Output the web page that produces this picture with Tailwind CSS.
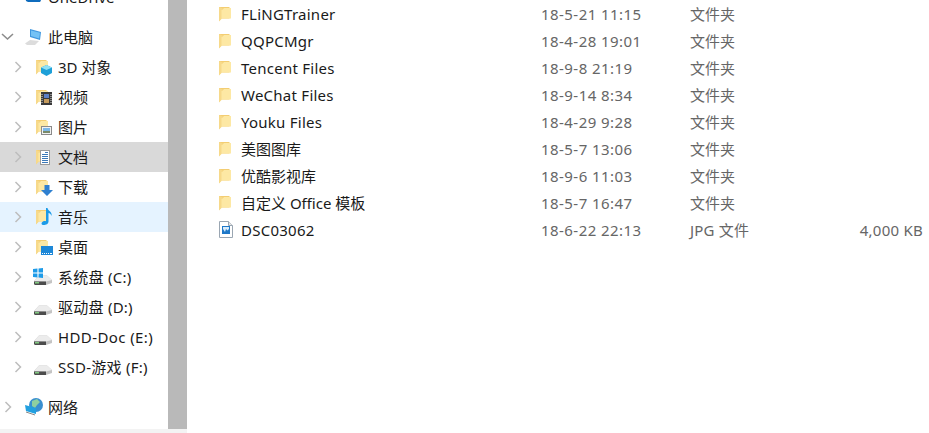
<!doctype html>
<html lang="zh"><head><meta charset="utf-8"><script src="https://cdn.jsdelivr.net/npm/@tailwindcss/browser@4"></script></head>
<body class="w-[929px] h-[433px] overflow-hidden bg-white font-['Noto_Sans','Noto_Sans_CJK_SC',sans-serif] text-[15px] leading-[20px] text-[#1a1a1a]">
<svg width="0" height="0" class="absolute">
<defs>
<symbol id="f" viewBox="0 0 12 16"><path d="M0 1h10.500v11.500H2L0 15z" fill="#f3cd72"/><path d="M1 3.500h2.500L5 2h7v10.500H1z" fill="#fde8a4"/><path d="M0 1v14.500L2.500 13V4L4 2.500" fill="#f7d98a"/></symbol>
<symbol id="ch" viewBox="0 0 8 12"><path d="M1.500 1l5 5-5 5" fill="none" stroke="#bdbdbd" stroke-width="1.500"/></symbol>
<symbol id="d" viewBox="0 0 20 10"><path d="M1 6l5-5.500h8L19 5v3l-6 2H2L1 9z" fill="#c4c4c4"/><path d="M1 6l5-5.500h8L19 5 13 6.500z" fill="#ececec"/><path d="M1 6.500h12V10H2L1 9z" fill="#4c4c4c"/><rect x="2" y="7" width="4" height="1.500" fill="#7fc97f"/></symbol>
</defs>
</svg>
<div class="flex h-[433px]">
<div class="w-[187px] shrink-0 h-full bg-[#f3f3f3]">
<div class="flex h-[429px] bg-white overflow-hidden">
<nav class="w-[168px] shrink-0 -mt-[18px] flex flex-col">
 <div class="h-[30px] flex items-center pl-[25px] gap-[5px]"><svg width="18" height="12" viewBox="0 0 18 12" class="-mt-[2px]"><path d="M1 11a4 4 0 0 1 4-5 5 5 0 0 1 9 1 3 3 0 0 1 1 5H3z" fill="#0f6cbd"/></svg><span>OneDrive</span></div>
 <div class="h-[10px]"></div>
 <div class="h-[30px] flex items-center">
  <svg width="14" height="8" viewBox="0 0 14 8" class="ml-[1px] mr-[9px]"><path d="M1 1l5.500 5L12 1" fill="none" stroke="#8c8c8c" stroke-width="1.600"/></svg>
  <svg width="20" height="18" viewBox="0 0 20 18" class="mr-[4px]"><path d="M6 1l11 3-1 8-10-3z" fill="#3f97df"/><path d="M7 2.500l9 2.200-.8 5.800L7 8z" fill="#74c2f5"/><path d="M1 15.500l5-3.500 9 1-4 4H3z" fill="#dcdcdc"/></svg>
  <span>此电脑</span></div>
 <div class="h-[30px] flex items-center pl-[14px]"><svg width="8" height="12" class="mr-[14px] shrink-0"><use href="#ch"/></svg>
  <span class="relative w-[16px] h-[18px] mr-[6px] shrink-0"><svg width="12" height="16" class="absolute left-0 top-[1px]"><use href="#f"/></svg><svg width="11" height="11" viewBox="0 0 11 11" class="absolute left-[5px] top-[7px]"><path d="M5.500 0L11 2.500V8L5.500 11 0 8V2.500z" fill="#1ea0d8"/><path d="M5.500 0L11 2.500 5.500 5 0 2.500z" fill="#8fe0f5"/></svg></span>
  <span>3D 对象</span></div>
 <div class="h-[30px] flex items-center pl-[14px]"><svg width="8" height="12" class="mr-[14px] shrink-0"><use href="#ch"/></svg>
  <span class="relative w-[16px] h-[18px] mr-[6px] shrink-0"><svg width="12" height="16" class="absolute left-0 top-[1px]"><use href="#f"/></svg><svg width="11" height="13" viewBox="0 0 11 13" class="absolute left-[5px] top-[4px]"><rect width="11" height="13" fill="#3a3a3a"/><rect x="3" y="2" width="5" height="4" fill="#5c7fc4"/><rect x="3" y="7" width="5" height="4" fill="#c49a5c"/><path d="M1 2v9M10 2v9" stroke="#ddd" stroke-width="1" stroke-dasharray="1 1"/></svg></span>
  <span>视频</span></div>
 <div class="h-[30px] flex items-center pl-[14px]"><svg width="8" height="12" class="mr-[14px] shrink-0"><use href="#ch"/></svg>
  <span class="relative w-[16px] h-[18px] mr-[6px] shrink-0"><svg width="12" height="16" class="absolute left-0 top-[1px]"><use href="#f"/></svg><svg width="11" height="9" viewBox="0 0 11 9" class="absolute left-[5px] top-[8px]"><rect x=".5" y=".5" width="10" height="8" fill="#f2f2f2" stroke="#8a8a8a"/><rect x="2" y="2" width="7" height="3" fill="#7db8e8"/><rect x="2" y="5" width="7" height="2" fill="#7a8a6a"/></svg></span>
  <span>图片</span></div>
 <div class="h-[30px] flex items-center pl-[14px] bg-[#d9d9d9]"><svg width="8" height="12" class="mr-[14px] shrink-0"><use href="#ch"/></svg>
  <span class="relative w-[16px] h-[18px] mr-[6px] shrink-0"><svg width="12" height="16" class="absolute left-0 top-[1px]"><use href="#f"/></svg><svg width="10" height="15" viewBox="0 0 10 15" class="absolute left-[4px] top-[2px]"><rect x=".5" y=".5" width="9" height="14" fill="#fff" stroke="#9a9a9a"/><path d="M5 2.500h3M2 4.500h6M2 6.500h6M2 8.500h6M2 10.500h6M2 12.500h6" stroke="#3b78b8"/></svg></span>
  <span>文档</span></div>
 <div class="h-[30px] flex items-center pl-[14px]"><svg width="8" height="12" class="mr-[14px] shrink-0"><use href="#ch"/></svg>
  <span class="relative w-[16px] h-[18px] mr-[6px] shrink-0"><svg width="12" height="16" class="absolute left-0 top-[1px]"><use href="#f"/></svg><svg width="12" height="11" viewBox="0 0 12 11" class="absolute left-[5px] top-[7px]"><path d="M3.500 0h5v5H12L6 11 0 5h3.500z" fill="#2f80d0"/></svg></span>
  <span>下载</span></div>
 <div class="h-[30px] flex items-center pl-[14px] bg-[#e5f3ff]"><svg width="8" height="12" class="mr-[14px] shrink-0"><use href="#ch"/></svg>
  <span class="relative w-[16px] h-[18px] mr-[6px] shrink-0"><svg width="12" height="16" class="absolute left-0 top-[1px]"><use href="#f"/></svg><svg width="12" height="17" viewBox="0 0 12 17" class="absolute left-[5px] top-0"><path d="M5 0h1.500c.5 3 5 3.500 4 8-.5-2-2-3-3-3v8.500C7.500 16 5 17 2.500 17 0 17 0 14.500 2 13.500c1-.5 2-.5 3-.2z" fill="#1c9be8"/></svg></span>
  <span>音乐</span></div>
 <div class="h-[30px] flex items-center pl-[14px]"><svg width="8" height="12" class="mr-[14px] shrink-0"><use href="#ch"/></svg>
  <span class="relative w-[16px] h-[18px] mr-[6px] shrink-0"><svg width="12" height="16" class="absolute left-0 top-[1px]"><use href="#f"/></svg><svg width="12" height="9" viewBox="0 0 12 9" class="absolute left-[5px] top-[8px]"><rect width="12" height="9" fill="#1e88d8"/><path d="M1 7.500h1M3 7.500h1M5 7.500h1M7 7.500h1M9 7.500h2" stroke="#fff"/></svg></span>
  <span>桌面</span></div>
 <div class="h-[30px] flex items-center pl-[14px]"><svg width="8" height="12" class="mr-[11px] shrink-0"><use href="#ch"/></svg>
  <span class="relative w-[20px] h-[18px] mr-[5px] shrink-0"><svg width="20" height="10" class="absolute left-0 top-[7px]"><use href="#d"/></svg><svg width="10" height="10" viewBox="0 0 9 9" class="absolute left-0 top-0"><path d="M0 1l4-.5V4H0zM5 .4L9 0v4H5zM0 5h4v3.500L0 8zM5 5h4v4l-4-.5z" fill="#1e9be8"/></svg></span>
  <span class="tracking-[.25px]">系统盘 (C:)</span></div>
 <div class="h-[30px] flex items-center pl-[14px]"><svg width="8" height="12" class="mr-[11px] shrink-0"><use href="#ch"/></svg><svg width="20" height="10" class="mr-[5px] mt-[6px] shrink-0"><use href="#d"/></svg><span class="tracking-[.25px]">驱动盘 (D:)</span></div>
 <div class="h-[30px] flex items-center pl-[14px]"><svg width="8" height="12" class="mr-[11px] shrink-0"><use href="#ch"/></svg><svg width="20" height="10" class="mr-[5px] mt-[6px] shrink-0"><use href="#d"/></svg><span class="tracking-[.4px]">HDD-Doc (E:)</span></div>
 <div class="h-[30px] flex items-center pl-[14px]"><svg width="8" height="12" class="mr-[11px] shrink-0"><use href="#ch"/></svg><svg width="20" height="10" class="mr-[5px] mt-[6px] shrink-0"><use href="#d"/></svg><span class="tracking-[.25px]">SSD-游戏 (F:)</span></div>
 <div class="h-[10px]"></div>
 <div class="h-[30px] flex items-center pl-[4px]"><svg width="8" height="12" class="mr-[12px] shrink-0"><use href="#ch"/></svg>
  <svg width="20" height="18" viewBox="0 0 20 18" class="mr-[4px] shrink-0"><circle cx="12" cy="7" r="7" fill="#3a8fd0"/><path d="M8 3l5-2 3 3-3 3-2 3-3-2z" fill="#8fd0a0"/><path d="M1 7l11 3v6L2 13z" fill="#22a0e0"/><path d="M2 14l9 3" stroke="#888"/></svg>
  <span>网络</span></div>
</nav>
<div class="w-[19px] h-full shrink-0 bg-[#b9b9b9]"></div>
</div>
</div>
<main class="flex-1 pl-[32px] pr-[6px] flex flex-col">
 <div class="h-[27px] flex items-center"><svg width="12" height="16" class="mr-[10px] shrink-0"><use href="#f"/></svg><span class="w-[300px] tracking-[.25px]">FLiNGTrainer</span><span class="w-[149px] text-[#666] tracking-[.45px]">18-5-21 11:15</span><span class="text-[#666]">文件夹</span></div>
 <div class="h-[27px] flex items-center"><svg width="12" height="16" class="mr-[10px] shrink-0"><use href="#f"/></svg><span class="w-[300px] tracking-[.25px]">QQPCMgr</span><span class="w-[149px] text-[#666] tracking-[.45px]">18-4-28 19:01</span><span class="text-[#666]">文件夹</span></div>
 <div class="h-[27px] flex items-center"><svg width="12" height="16" class="mr-[10px] shrink-0"><use href="#f"/></svg><span class="w-[300px] tracking-[.25px]">Tencent Files</span><span class="w-[149px] text-[#666] tracking-[.45px]">18-9-8 21:19</span><span class="text-[#666]">文件夹</span></div>
 <div class="h-[27px] flex items-center"><svg width="12" height="16" class="mr-[10px] shrink-0"><use href="#f"/></svg><span class="w-[300px] tracking-[.25px]">WeChat Files</span><span class="w-[149px] text-[#666] tracking-[.45px]">18-9-14 8:34</span><span class="text-[#666]">文件夹</span></div>
 <div class="h-[27px] flex items-center"><svg width="12" height="16" class="mr-[10px] shrink-0"><use href="#f"/></svg><span class="w-[300px] tracking-[.25px]">Youku Files</span><span class="w-[149px] text-[#666] tracking-[.45px]">18-4-29 9:28</span><span class="text-[#666]">文件夹</span></div>
 <div class="h-[27px] flex items-center"><svg width="12" height="16" class="mr-[10px] shrink-0"><use href="#f"/></svg><span class="w-[300px]">美图图库</span><span class="w-[149px] text-[#666] tracking-[.45px]">18-5-7 13:06</span><span class="text-[#666]">文件夹</span></div>
 <div class="h-[27px] flex items-center"><svg width="12" height="16" class="mr-[10px] shrink-0"><use href="#f"/></svg><span class="w-[300px]">优酷影视库</span><span class="w-[149px] text-[#666] tracking-[.45px]">18-9-6 11:03</span><span class="text-[#666]">文件夹</span></div>
 <div class="h-[27px] flex items-center"><svg width="12" height="16" class="mr-[10px] shrink-0"><use href="#f"/></svg><span class="w-[300px]">自定义 Office 模板</span><span class="w-[149px] text-[#666] tracking-[.45px]">18-5-7 16:47</span><span class="text-[#666]">文件夹</span></div>
 <div class="h-[27px] flex items-center"><svg width="14" height="17" viewBox="0 0 14 17" class="mr-[8px] shrink-0"><path d="M.5.500h9l4 4v12H.5z" fill="#fff" stroke="#9aa6b2"/><path d="M9.500.500v4h4" fill="#e6e6e6" stroke="#9aa6b2"/><rect x="3" y="5" width="8" height="8" fill="#1e78c8"/><path d="M4 6h6v2l-1.500 1.500L7 8l-1 3-2-3z" fill="#d8ecfb"/></svg><span class="w-[300px] tracking-[.25px]">DSC03062</span><span class="w-[149px] text-[#666] tracking-[.45px]">18-6-22 22:13</span><span class="text-[#666] tracking-[.2px]">JPG 文件</span><span class="ml-auto text-[#666] tracking-[.25px]">4,000 KB</span></div>
</main>
</div>
</body></html>
